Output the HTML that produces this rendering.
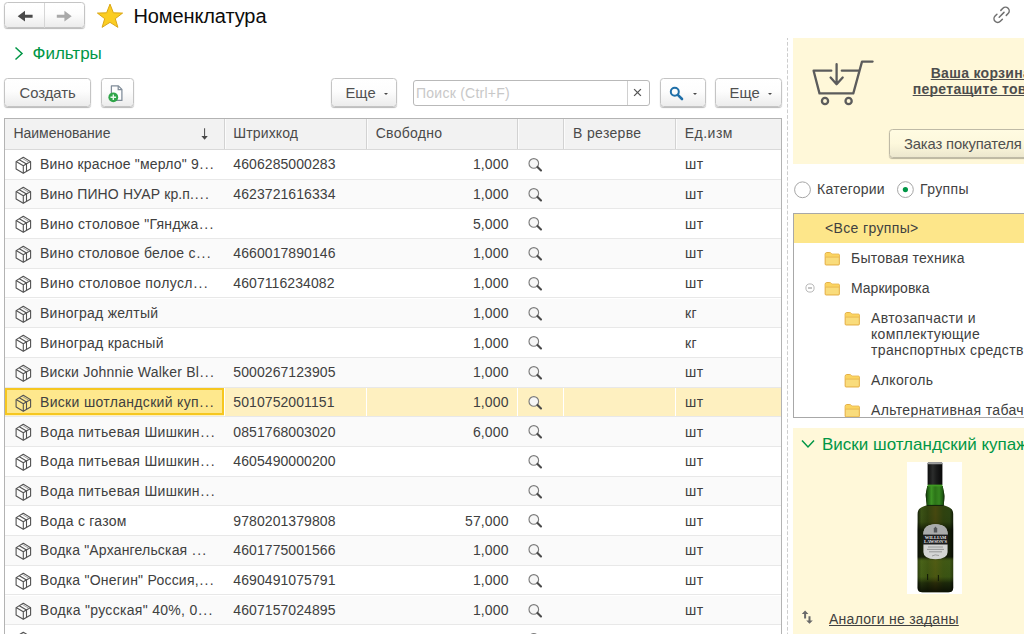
<!DOCTYPE html>
<html lang="ru">
<head>
<meta charset="utf-8">
<title>Номенклатура</title>
<style>
*{box-sizing:border-box;margin:0;padding:0}
html,body{width:1024px;height:634px;overflow:hidden;background:#fff}
body{font-family:"Liberation Sans",Arial,sans-serif;font-size:14px;color:#424242;position:relative}
.abs{position:absolute}
.btn{position:absolute;border:1px solid #c4c4c4;border-radius:3.5px;background:linear-gradient(#ffffff 0%,#fdfdfd 45%,#ececec 100%);box-shadow:0 1px 1px rgba(0,0,0,.28);color:#505050;font-size:14.8px;white-space:nowrap}
.btn span{position:absolute;top:.5px;line-height:27px}
.caret{position:absolute;width:0;height:0;border-left:2.9px solid transparent;border-right:2.9px solid transparent;border-top:2.9px solid #484848;margin-left:-.3px}
#title{left:133.4px;top:2.6px;font-size:20px;line-height:26px;color:#0c0c0c;letter-spacing:-.1px;white-space:nowrap}
#filters{left:32.5px;top:44px;font-size:17px;line-height:20px;color:#009646;white-space:nowrap}
/* table */
#tbl{left:4px;top:118px;width:778px;height:520px;border:1px solid #b3b3b3;border-bottom:none;overflow:hidden;background:#fff}
#thead{position:absolute;left:0;top:0;width:776px;height:31px;background:#f2f2f2;border-bottom:1px solid #d9d9d9}
#thead div{position:absolute;top:0;height:30px;line-height:29px;font-size:14px;color:#4a4a4a;white-space:nowrap}
#thead i{position:absolute;top:0;width:1px;height:30px;background:#d2d2d2;box-shadow:1px 0 0 #fbfbfb}
.row{position:absolute;left:0;width:776px;height:29.7px;border-bottom:1px solid #e8e8e8;background:#fff}
.row.alt{background:#fafafa}
.row div{position:absolute;top:.4px;height:29px;line-height:29px;font-size:14px;color:#404040;white-space:nowrap;overflow:hidden}
.row .n{left:35px;width:180px;letter-spacing:0.25px}
.row .b{left:228.3px;letter-spacing:0.08px}
.row .f{left:362px;width:141.7px;text-align:right;letter-spacing:.15px}
.row .u{left:680px;letter-spacing:.45px}
.row svg.box{position:absolute;left:0;top:0}
.row svg.mag{position:absolute;left:0;top:0}
.row.sel .hl{position:absolute;left:0;top:.9px;width:776px;height:27.4px;background:#fef0c0}
.row .n span{letter-spacing:1.25px;margin-left:0.6px}
.row.sel .cur{position:absolute;left:0;top:.9px;width:219px;height:27px;background:#fee88d;border:2px solid #f6c720}
.row.sel em{position:absolute;top:.9px;width:1px;height:27.4px;background:#fff}
/* right */
.ypanel{position:absolute;background:#fff8d9}
.lnk{font-weight:bold;text-decoration:underline;text-decoration-skip-ink:none;color:#4d4d4d}
.tree{position:absolute;left:793px;top:213px;width:240px;height:205px;border:1px solid #a8a8a8;background:#fff;overflow:hidden}
.tree .t{position:absolute;font-size:14px;line-height:16px;color:#404040;white-space:nowrap}
.tree svg{position:absolute}
</style>
</head>
<body>

<!-- nav buttons -->
<div class="btn" style="left:4px;top:2px;width:81px;height:26.4px;">
  <i style="position:absolute;left:39px;top:0;width:1px;height:25px;background:#d6d6d6"></i>
  <svg style="position:absolute;left:11px;top:7px" width="18" height="13" viewBox="0 0 18 13"><path d="M1.7 6.2 L9 0.8 L9 4.7 L16.6 4.7 L16.6 7.7 L9 7.7 L9 11.6 Z" fill="#4a4a4a"/></svg>
  <svg style="position:absolute;left:50px;top:7px" width="18" height="13" viewBox="0 0 18 13"><path d="M16.7 6.2 L9.4 0.8 L9.4 4.7 L1.8 4.7 L1.8 7.7 L9.4 7.7 L9.4 11.6 Z" fill="#a9a9a9"/></svg>
</div>
<!-- star -->
<svg class="abs" style="left:96px;top:2px" width="28" height="27" viewBox="0 0 28 28" preserveAspectRatio="none"><path d="M14 2.2 L17.4 11.2 L26.6 11.5 L19.3 17.3 L21.9 26.3 L14 21.1 L6.1 26.3 L8.7 17.3 L1.4 11.5 L10.6 11.2 Z" fill="#fbcd22" stroke="#d9a514" stroke-width="1" stroke-linejoin="miter"/></svg>
<div id="title" class="abs">Номенклатура</div>
<!-- link icon -->
<svg class="abs" style="left:990px;top:3px" width="24" height="24" viewBox="-12 -12 24 24" fill="none" stroke="#707070" stroke-width="1.5" stroke-linecap="round"><g transform="translate(-0.4 -0.2) rotate(-45)"><path d="M2.6 -3.7 H5.5 A3.7 3.7 0 0 1 5.5 3.7 H2.9"/><path d="M-2.6 3.7 H-5.5 A3.7 3.7 0 0 1 -5.5 -3.7 H-2.9"/><path d="M-3.4 0 H3.4"/></g></svg>

<!-- filters -->
<svg class="abs" style="left:14px;top:46px" width="10" height="16" viewBox="0 0 10 16" fill="none" stroke="#009646" stroke-width="1.5"><path d="M1.5 1.5 L8 7.5 L1.5 13.5"/></svg>
<div id="filters" class="abs">Фильтры</div>

<!-- toolbar -->
<div class="btn" style="left:4px;top:78px;width:87px;height:29px"><span style="left:14.5px">Создать</span></div>
<div class="btn" style="left:100.5px;top:78px;width:33.5px;height:29px">
  <svg style="position:absolute;left:-0.8px;top:1px" width="32" height="26" viewBox="0 0 32 26"><path d="M10.4 5.9 H17.4 L20.9 9.4 V20.4 H10.4 Z" fill="#fdfdfd" stroke="#7f8b98" stroke-width="1.25" stroke-linejoin="round"/><path d="M17.2 6 V9.6 H20.8" fill="none" stroke="#7f8b98" stroke-width="1.25"/><circle cx="12.3" cy="17.3" r="4.9" fill="#2fa549"/><path d="M12.3 14.5 V20.1 M9.5 17.3 H15.1" stroke="#e9f7ec" stroke-width="1.4"/></svg>
</div>
<div class="btn" style="left:331px;top:78px;width:66px;height:29px"><span style="left:13.5px">Еще</span><b class="caret" style="left:51.8px;top:14px"></b></div>
<div class="abs" style="left:413px;top:80px;width:237px;height:26px;border:1px solid #b9b9b9;border-radius:3px;background:#fff">
  <span style="position:absolute;left:2px;top:0;line-height:24px;font-size:14px;color:#c8c8c8;white-space:nowrap;letter-spacing:.25px">Поиск (Ctrl+F)</span>
  <i style="position:absolute;left:212.6px;top:0;width:1px;height:24px;background:#d0d0d0"></i>
  <svg style="position:absolute;left:218.9px;top:7.3px" width="9" height="9" viewBox="0 0 9 9" stroke="#555" stroke-width="1.3"><path d="M1.1 1.1 L7.9 7.9 M7.9 1.1 L1.1 7.9"/></svg>
</div>
<div class="btn" style="left:660px;top:78px;width:46px;height:29px">
  <svg style="position:absolute;left:8px;top:7px" width="15" height="15" viewBox="0 0 15 15" fill="none" stroke="#1f6fa8"><circle cx="5.8" cy="5.8" r="4" stroke-width="2"/><path d="M8.8 8.8 L13 13" stroke-width="2.6" stroke-linecap="round"/></svg>
  <b class="caret" style="left:32.3px;top:14px"></b>
</div>
<div class="btn" style="left:715px;top:78px;width:67px;height:29px"><span style="left:13.6px">Еще</span><b class="caret" style="left:52.6px;top:14px"></b></div>

<!-- table -->
<div id="tbl" class="abs">
  <div id="thead">
    <div style="left:8.4px">Наименование</div>
    <svg style="position:absolute;left:195px;top:8px" width="10" height="14" viewBox="0 0 10 14"><path d="M4.1 1.3 H5.1 V9 H7.8 L4.6 12.8 L1.4 9 H4.1 Z" fill="#484848"/></svg>
    <i style="left:219px"></i><div style="left:228.2px;letter-spacing:.15px">Штрихкод</div>
    <i style="left:361px"></i><div style="left:370.7px;letter-spacing:.28px">Свободно</div>
    <i style="left:512px"></i>
    <i style="left:558px"></i><div style="left:568.1px;letter-spacing:.33px">В резерве</div>
    <i style="left:670px"></i><div style="left:679.7px;letter-spacing:.5px">Ед.изм</div>
  </div>
  <div id="rows">
    <div class="row" style="top:31.00px"><svg class="box" width="30" height="29"><use href="#box"/></svg><div class="n" style="letter-spacing:0.185px">Вино красное "мерло" 9<span>...</span></div><div class="b">4606285000283</div><div class="f">1,000</div><svg class="mag" width="545" height="29"><use href="#mag"/></svg><div class="u">шт</div></div>
    <div class="row alt" style="top:60.70px"><svg class="box" width="30" height="29"><use href="#box"/></svg><div class="n" style="letter-spacing:0.13px">Вино ПИНО НУАР кр.п.<span>...</span></div><div class="b">4623721616334</div><div class="f">1,000</div><svg class="mag" width="545" height="29"><use href="#mag"/></svg><div class="u">шт</div></div>
    <div class="row" style="top:90.40px"><svg class="box" width="30" height="29"><use href="#box"/></svg><div class="n" style="letter-spacing:0.295px">Вино столовое "Гянджа<span>...</span></div><div class="f">5,000</div><svg class="mag" width="545" height="29"><use href="#mag"/></svg><div class="u">шт</div></div>
    <div class="row alt" style="top:120.10px"><svg class="box" width="30" height="29"><use href="#box"/></svg><div class="n" style="letter-spacing:0.27px">Вино столовое белое с<span>...</span></div><div class="b">4660017890146</div><div class="f">1,000</div><svg class="mag" width="545" height="29"><use href="#mag"/></svg><div class="u">шт</div></div>
    <div class="row" style="top:149.80px"><svg class="box" width="30" height="29"><use href="#box"/></svg><div class="n" style="letter-spacing:0.37px">Вино столовое полусл<span>...</span></div><div class="b">4607116234082</div><div class="f">1,000</div><svg class="mag" width="545" height="29"><use href="#mag"/></svg><div class="u">шт</div></div>
    <div class="row alt" style="top:179.50px"><svg class="box" width="30" height="29"><use href="#box"/></svg><div class="n">Виноград желтый</div><div class="f">1,000</div><svg class="mag" width="545" height="29"><use href="#mag"/></svg><div class="u">кг</div></div>
    <div class="row" style="top:209.20px"><svg class="box" width="30" height="29"><use href="#box"/></svg><div class="n">Виноград красный</div><div class="f">1,000</div><svg class="mag" width="545" height="29"><use href="#mag"/></svg><div class="u">кг</div></div>
    <div class="row alt" style="top:238.90px"><svg class="box" width="30" height="29"><use href="#box"/></svg><div class="n" style="letter-spacing:0.21px">Виски Johnnie Walker Bl<span>...</span></div><div class="b">5000267123905</div><div class="f">1,000</div><svg class="mag" width="545" height="29"><use href="#mag"/></svg><div class="u">шт</div></div>
    <div class="row sel" style="top:268.60px"><span class="hl"></span><span class="cur"></span><em style="left:219px"></em><em style="left:361px"></em><em style="left:512px"></em><em style="left:558px"></em><em style="left:670px"></em><svg class="box" width="30" height="29"><use href="#box"/></svg><div class="n" style="letter-spacing:0.32px">Виски шотландский куп<span>...</span></div><div class="b">5010752001151</div><div class="f">1,000</div><svg class="mag" width="545" height="29"><use href="#mag"/></svg><div class="u">шт</div></div>
    <div class="row alt" style="top:298.30px"><svg class="box" width="30" height="29"><use href="#box"/></svg><div class="n" style="letter-spacing:0.31px">Вода питьевая Шишкин<span>...</span></div><div class="b">0851768003020</div><div class="f">6,000</div><svg class="mag" width="545" height="29"><use href="#mag"/></svg><div class="u">шт</div></div>
    <div class="row" style="top:328.00px"><svg class="box" width="30" height="29"><use href="#box"/></svg><div class="n" style="letter-spacing:0.31px">Вода питьевая Шишкин<span>...</span></div><div class="b">4605490000200</div><svg class="mag" width="545" height="29"><use href="#mag"/></svg><div class="u">шт</div></div>
    <div class="row alt" style="top:357.70px"><svg class="box" width="30" height="29"><use href="#box"/></svg><div class="n" style="letter-spacing:0.31px">Вода питьевая Шишкин<span>...</span></div><svg class="mag" width="545" height="29"><use href="#mag"/></svg><div class="u">шт</div></div>
    <div class="row" style="top:387.40px"><svg class="box" width="30" height="29"><use href="#box"/></svg><div class="n">Вода с газом</div><div class="b">9780201379808</div><div class="f">57,000</div><svg class="mag" width="545" height="29"><use href="#mag"/></svg><div class="u">шт</div></div>
    <div class="row alt" style="top:417.10px"><svg class="box" width="30" height="29"><use href="#box"/></svg><div class="n" style="letter-spacing:0.18px">Водка "Архангельская <span>...</span></div><div class="b">4601775001566</div><div class="f">1,000</div><svg class="mag" width="545" height="29"><use href="#mag"/></svg><div class="u">шт</div></div>
    <div class="row" style="top:446.80px"><svg class="box" width="30" height="29"><use href="#box"/></svg><div class="n" style="letter-spacing:0.23px">Водка "Онегин" Россия,<span>...</span></div><div class="b">4690491075791</div><div class="f">1,000</div><svg class="mag" width="545" height="29"><use href="#mag"/></svg><div class="u">шт</div></div>
    <div class="row alt" style="top:476.50px"><svg class="box" width="30" height="29"><use href="#box"/></svg><div class="n" style="letter-spacing:0.31px">Водка "русская" 40%, 0<span>...</span></div><div class="b">4607157024895</div><div class="f">1,000</div><svg class="mag" width="545" height="29"><use href="#mag"/></svg><div class="u">шт</div></div>
    <div class="row" style="top:506.20px"><svg class="box" width="30" height="29"><use href="#box"/></svg><div class="n">Водка</div><svg class="mag" width="545" height="29"><use href="#mag"/></svg><div class="u">шт</div></div>
  </div>
</div>

<!-- splitter -->
<div class="abs" style="left:787px;top:38px;width:1px;height:600px;background:repeating-linear-gradient(to bottom,#cdcdcd 0,#cdcdcd 3.7px,transparent 3.7px,transparent 5.64px);background-position:0 -1.7px;background-size:1px 5.64px;background-repeat:repeat-y"></div>

<!-- basket panel -->
<div class="ypanel" style="left:793px;top:38px;width:240px;height:126px"></div>
<svg class="abs" style="left:808px;top:56px" width="70" height="52" viewBox="808 56 70 52" fill="none" stroke="#5c5c5c" stroke-width="2.3" stroke-linecap="round" stroke-linejoin="round">
  <path d="M831.3 70.7 H813.6 L819.5 93.4 H853.3 L862 61.6 H872.6"/>
  <path d="M841.8 70.7 H858.5"/>
  <path d="M836.6 64.2 V84 M830.6 77.5 L836.6 84.2 L842.7 77.5"/>
  <circle cx="825" cy="101" r="3.1"/><circle cx="848.6" cy="101" r="3.1"/>
</svg>
<div class="abs lnk" style="left:895px;top:64.6px;width:220px;text-align:center;font-size:14px;line-height:16.6px;white-space:nowrap;letter-spacing:.3px">Ваша корзина пуста,<br>перетащите товары сюда</div>
<div class="btn" style="left:889px;top:129px;width:200px;height:29px;background:linear-gradient(#fffbe2 0%,#fdf8dc 50%,#ece7ce 100%);border-color:#bfbaa6"><span style="left:14px;line-height:27px;letter-spacing:-.15px">Заказ покупателя</span></div>

<!-- radios -->
<svg class="abs" style="left:792px;top:180px" width="130" height="20" viewBox="0 0 130 20"><circle cx="10.5" cy="9.8" r="7.9" fill="#fff" stroke="#a6a6a6"/><circle cx="113.4" cy="9.6" r="7.9" fill="#fff" stroke="#a6a6a6"/><circle cx="113.4" cy="9.6" r="2.6" fill="#009646"/></svg>
<div class="abs" style="left:817px;top:180px;line-height:18px;font-size:14px;white-space:nowrap;letter-spacing:.25px">Категории</div>
<div class="abs" style="left:920px;top:180px;line-height:18px;font-size:14px;white-space:nowrap;letter-spacing:.37px">Группы</div>

<!-- tree -->
<div class="tree">
  <div style="position:absolute;left:0;top:0;width:240px;height:29px;background:#fde68a"></div>
  <div class="t" style="left:31px;top:5.8px;letter-spacing:.36px">&lt;Все группы&gt;</div>
  <div class="t" style="left:57px;top:35.5px;letter-spacing:.22px">Бытовая техника</div>
  <div class="t" style="left:57px;top:65.5px">Маркировка</div>
  <div class="t" style="left:77px;top:95.8px;letter-spacing:.34px;line-height:16.2px">Автозапчасти и<br>комплектующие<br>транспортных средств</div>
  <div class="t" style="left:77px;top:157.8px;letter-spacing:.38px">Алкоголь</div>
  <div class="t" style="left:77px;top:187.8px;letter-spacing:.35px">Альтернативная табачная</div>
  <svg style="left:10.1px;top:67.6px" width="12" height="12" viewBox="0 0 12 12" fill="none" stroke="#b8b8b8"><circle cx="6" cy="6" r="4.1"/><path d="M4 6 H8" stroke="#808080" stroke-width="0.9"/></svg>
  <svg style="left:29.6px;top:36.6px" width="18" height="16"><use href="#fold"/></svg>
  <svg style="left:29.6px;top:66.6px" width="18" height="16"><use href="#fold"/></svg>
  <svg style="left:49.6px;top:96.6px" width="18" height="16"><use href="#fold"/></svg>
  <svg style="left:49.6px;top:158.6px" width="18" height="16"><use href="#fold"/></svg>
  <svg style="left:49.6px;top:188.6px" width="18" height="16"><use href="#fold"/></svg>
</div>
<svg width="0" height="0" style="position:absolute"><defs><g id="box" fill="none" stroke="#525252" stroke-width="1.1" stroke-linejoin="round"><path d="M18.3 7.3 L25.6 11.6 V19 L18.3 23.2 L11.1 19 V11.6 Z"/><path d="M11.1 11.6 L18.3 15.8 L25.6 11.6 M18.3 15.8 V23.2"/><path d="M14.3 9.7 L21.5 13.9 V21.2"/><path d="M16.9 8.2 L24 12.4" stroke="#8a8a8a" stroke-width=".8"/></g><g id="mag" fill="none"><circle cx="528.8" cy="13.4" r="4.8" fill="#f6f6f6" stroke="#7c7c7c" stroke-width="1.15"/><path d="M532.5 16.9 L536 20.5" stroke="#4a4a4a" stroke-width="2.1" stroke-linecap="round"/></g><g id="fold" transform="translate(0.2 0.6) scale(0.935 0.93)"><path d="M1 3 Q1 1.1 2.6 1 H6 Q6.9 1 7.4 1.8 L8 2.7 H15.2 Q16.2 2.7 16.2 3.7 V13.4 Q16.2 14.4 15.2 14.4 H2 Q1 14.4 1 13.4 Z" fill="#f9dc7c" stroke="#e2a93b" stroke-width="1"/><path d="M1.5 3 Q1.5 1.6 2.6 1.5 H6 Q6.6 1.5 7 2.1 L7.7 3.2 H15.2 Q15.7 3.2 15.7 3.7 V5.6 H1.5 Z" fill="#fbd460"/><path d="M1.5 5.9 H15.7" stroke="#e6b248" stroke-width="0.9"/></g></defs></svg>

<!-- detail panel -->
<div class="ypanel" style="left:793px;top:428px;width:240px;height:210px"></div>
<svg class="abs" style="left:801px;top:439px" width="14" height="10" viewBox="0 0 14 10" fill="none" stroke="#009646" stroke-width="1.5"><path d="M1 1.5 L7 8 L13 1.5"/></svg>
<div class="abs" style="left:822px;top:435px;font-size:17px;line-height:20px;color:#009646;white-space:nowrap">Виски шотландский купажированный</div>
<svg class="abs" id="bottle" style="left:907px;top:462px" width="55" height="132" viewBox="0 0 55 132">
  <defs>
    <linearGradient id="gBody" x1="0" x2="1" y1="0" y2="0"><stop offset="0" stop-color="#141f08"/><stop offset=".1" stop-color="#3b5216"/><stop offset=".28" stop-color="#31430f"/><stop offset=".5" stop-color="#46480f"/><stop offset=".72" stop-color="#2f420f"/><stop offset=".9" stop-color="#2c4312"/><stop offset="1" stop-color="#121c07"/></linearGradient>
    <linearGradient id="gNeck" x1="0" x2="1" y1="0" y2="0"><stop offset="0" stop-color="#0f2408"/><stop offset=".1" stop-color="#1f5a12"/><stop offset=".3" stop-color="#3d9424"/><stop offset=".5" stop-color="#2c7418"/><stop offset=".72" stop-color="#36861f"/><stop offset=".9" stop-color="#1f5a12"/><stop offset="1" stop-color="#0f2408"/></linearGradient>
    <linearGradient id="gCap" x1="0" x2="1" y1="0" y2="0"><stop offset="0" stop-color="#0d0d0d"/><stop offset=".35" stop-color="#2b2d2c"/><stop offset=".6" stop-color="#1a1b1b"/><stop offset="1" stop-color="#080808"/></linearGradient>
    <linearGradient id="gShade" x1="0" x2="0" y1="0" y2="1"><stop offset="0" stop-color="#000" stop-opacity="0"/><stop offset=".1" stop-color="#000" stop-opacity=".05"/><stop offset=".2" stop-color="#000" stop-opacity=".6"/><stop offset=".55" stop-color="#000" stop-opacity=".6"/><stop offset=".6" stop-color="#6a8a1e" stop-opacity=".3"/><stop offset=".8" stop-color="#587a18" stop-opacity=".3"/><stop offset=".88" stop-color="#000" stop-opacity=".4"/><stop offset="1" stop-color="#000" stop-opacity=".75"/></linearGradient>
  </defs>
  <rect width="55" height="132" fill="#fff"/>
  <path d="M20.2 24 C19.6 29 18.6 31 18.8 34 C19 38 19.6 40 19.7 43.2 C14 45 10.6 46.5 10.6 52 V126 Q10.6 130.2 15.5 130.2 H41.3 Q46.2 130.2 46.2 126 V52 C46.2 46.5 42.5 45 36.8 43.2 C36.9 40 37.4 38 37.4 34 C37.4 31 36.4 29 35.8 24 Z" fill="url(#gBody)"/>
  <path d="M20.2 24 C19.6 29 18.6 31 18.8 34 C19 38 19.6 40 19.7 43.4 H36.8 C36.9 40 37.4 38 37.4 34 C37.4 31 36.4 29 35.8 24 Z" fill="url(#gNeck)"/>
  <path d="M10.6 52 V126 Q10.6 130.2 15.5 130.2 H41.3 Q46.2 130.2 46.2 126 V52 Z" fill="url(#gShade)"/>
  <rect x="20.6" y="0.6" width="14.8" height="22.6" rx="0.8" fill="url(#gCap)"/>
  <rect x="20.8" y="0.6" width="14.4" height="1.6" rx="0.6" fill="#9a9c9c"/>
  <rect x="20.6" y="22.6" width="14.8" height="1.8" fill="#3f9a22"/>
  <path d="M19.9 43.4 H36.6" stroke="#10200a" stroke-width="1"/>
  <path d="M16.4 72 Q16.4 62.5 28.5 62.2 Q40.6 62.5 40.6 72 V90 Q40.6 97 28.5 97.2 Q16.4 97 16.4 90 Z" fill="#d4d5d4"/>
  <path d="M16.4 72 Q16.4 62.5 28.5 62.2 Q40.6 62.5 40.6 72 V73 H16.4 Z" fill="#a9abab"/>
  <path d="M26.8 70.5 V66.5 L28.5 64.6 L30.2 66.5 V70.5 Z" fill="#55585a"/>
  <rect x="15.8" y="72.6" width="25.4" height="9.9" fill="#1d1e1f"/>
  <text x="28.5" y="77" font-family="'Liberation Serif',serif" font-size="4.6" font-weight="bold" fill="#e8e8e8" text-anchor="middle" textLength="21.5" lengthAdjust="spacingAndGlyphs">WILLIAM</text>
  <text x="28.5" y="81.4" font-family="'Liberation Serif',serif" font-size="4.6" font-weight="bold" fill="#e8e8e8" text-anchor="middle" textLength="23" lengthAdjust="spacingAndGlyphs">LAWSON'S</text>
  <path d="M21 85 H36 M20 87.4 H37 M22 89.8 H35" stroke="#8e9090" stroke-width="0.9"/>
  <path d="M25 94 Q28 92 32 93.5" stroke="#777" stroke-width="0.6" fill="none"/>
  <path d="M20.6 112 V118 M31.4 113 V119" stroke="#141c08" stroke-width="1.1"/>
</svg>
<svg class="abs" style="left:800px;top:608px" width="16" height="18" viewBox="800 608 16 18" fill="#6a6a6a"><path d="M805.1 610.5 L808.4 614 H806.1 V618.5 H804.1 V614 H801.8 Z"/><path d="M809.5 623.8 L806.2 620.4 H808.5 V616.3 H810.5 V620.4 H812.8 Z"/></svg>
<div class="abs" style="left:829px;top:610px;font-size:14px;line-height:18px;text-decoration:underline;text-decoration-skip-ink:none;color:#404040;white-space:nowrap;letter-spacing:.27px">Аналоги не заданы</div>

</body>
</html>
